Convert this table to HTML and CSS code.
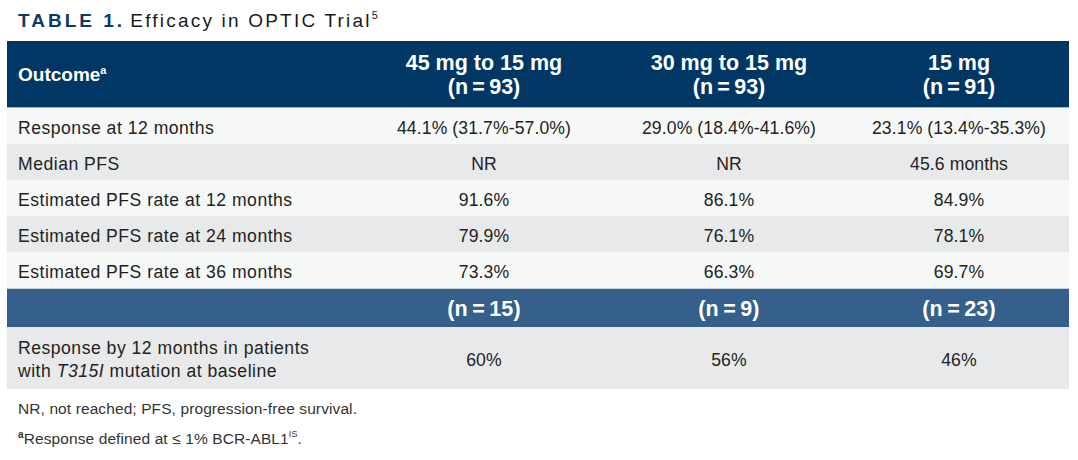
FILE: index.html
```html
<!DOCTYPE html>
<html>
<head>
<meta charset="utf-8">
<link rel="stylesheet" href="styles.css">
</head>
<body>
<div class="page">
  <h1 class="title"><span class="title-num">TABLE 1.</span> <span class="title-text">Efficacy in OPTIC Trial<sup class="title-ref">5</sup></span></h1>
  <table class="efficacy">
    <colgroup>
      <col class="c-label">
      <col class="c-a">
      <col class="c-b">
      <col class="c-c">
    </colgroup>
    <thead>
      <tr class="head">
        <th class="label-head">Outcome<sup class="sup-a">a</sup></th>
        <th>45 mg to 15 mg<br>(n&#8201;=&#8201;93)</th>
        <th>30 mg to 15 mg<br>(n&#8201;=&#8201;93)</th>
        <th>15 mg<br>(n&#8201;=&#8201;91)</th>
      </tr>
    </thead>
    <tbody>
      <tr class="light">
        <td class="label">Response at 12 months</td>
        <td>44.1% (31.7%-57.0%)</td>
        <td>29.0% (18.4%-41.6%)</td>
        <td>23.1% (13.4%-35.3%)</td>
      </tr>
      <tr class="grey">
        <td class="label">Median PFS</td>
        <td>NR</td>
        <td>NR</td>
        <td>45.6 months</td>
      </tr>
      <tr class="light">
        <td class="label">Estimated PFS rate at 12 months</td>
        <td>91.6%</td>
        <td>86.1%</td>
        <td>84.9%</td>
      </tr>
      <tr class="grey">
        <td class="label">Estimated PFS rate at 24 months</td>
        <td>79.9%</td>
        <td>76.1%</td>
        <td>78.1%</td>
      </tr>
      <tr class="light">
        <td class="label">Estimated PFS rate at 36 months</td>
        <td>73.3%</td>
        <td>66.3%</td>
        <td>69.7%</td>
      </tr>
      <tr class="sub">
        <td class="label"></td>
        <td>(n&#8201;=&#8201;15)</td>
        <td>(n&#8201;=&#8201;9)</td>
        <td>(n&#8201;=&#8201;23)</td>
      </tr>
      <tr class="grey tall">
        <td class="label">Response by 12 months in patients<br>with <i>T315I</i> mutation at baseline</td>
        <td>60%</td>
        <td>56%</td>
        <td>46%</td>
      </tr>
    </tbody>
  </table>
  <p class="note">NR, not reached; PFS, progression-free survival.</p>
  <p class="note"><sup class="note-a">a</sup>Response defined at ≤ 1% BCR-ABL1<sup class="note-is">IS</sup>.</p>
</div>
</body>
</html>
```

FILE: styles.css
```css
html, body {
  margin: 0;
  padding: 0;
  background: #ffffff;
}

body {
  font-family: "Liberation Sans", Arial, sans-serif;
  color: #231f20;
}

.page {
  padding: 8px 9px 0 7px;
}

.title {
  margin: 0 0 8px 11px;
  font-size: 19px;
  line-height: 25px;
  font-weight: normal;
  white-space: nowrap;
}

.title-num {
  color: #0b3a68;
  font-weight: bold;
  letter-spacing: 3px;
}

.title-text {
  color: #1a1a1a;
  letter-spacing: 2.2px;
}

.title-ref {
  font-size: 11px;
  letter-spacing: 0;
  vertical-align: 8px;
  line-height: 0;
}

.efficacy {
  width: 1062px;
  border-collapse: collapse;
  table-layout: fixed;
  font-size: 17.6px;
}

.c-label { width: 352px; }
.c-a { width: 250px; }
.c-b { width: 240px; }
.c-c { width: 220px; }

.head {
  background: #003764;
  color: #ffffff;
  border-bottom: 1px solid #9fb2c8;
}

.head th {
  height: 65px;
  font-size: 21.5px;
  line-height: 24px;
  font-weight: bold;
  text-align: center;
  padding: 0;
  padding-top: 1px;
}

.head th.label-head {
  text-align: left;
  font-size: 19px;
  padding-left: 11px;
}

.sup-a {
  font-size: 11px;
  vertical-align: 7px;
  line-height: 0;
}

.efficacy td {
  text-align: center;
  padding: 9px 0 5px;
  line-height: 22px;
  letter-spacing: 0.1px;
}

.efficacy td.label {
  text-align: left;
  padding-left: 11px;
  letter-spacing: 0.5px;
}

.light { background: #f6f7f7; }
.grey { background: #e8e9eb; }

.sub {
  background: #35608b;
  color: #ffffff;
  border-top: 1px solid #c9d2dc;
}

.efficacy .sub td {
  font-size: 21.5px;
  font-weight: bold;
  line-height: 24px;
  padding: 8px 0 6px;
}

.efficacy .tall td {
  line-height: 23px;
  padding: 10px 0 6px;
}

.efficacy .tall td.label {
  padding-left: 11px;
}

.note {
  margin: 10px 0 0 11px;
  font-size: 15.5px;
  line-height: 20px;
  letter-spacing: 0.1px;
  color: #333333;
}

.note + .note {
  margin-top: 10px;
}

.note-a {
  font-size: 10px;
  font-weight: bold;
  vertical-align: 6px;
  line-height: 0;
}

.note-is {
  font-size: 9px;
  vertical-align: 7px;
  line-height: 0;
}
```
